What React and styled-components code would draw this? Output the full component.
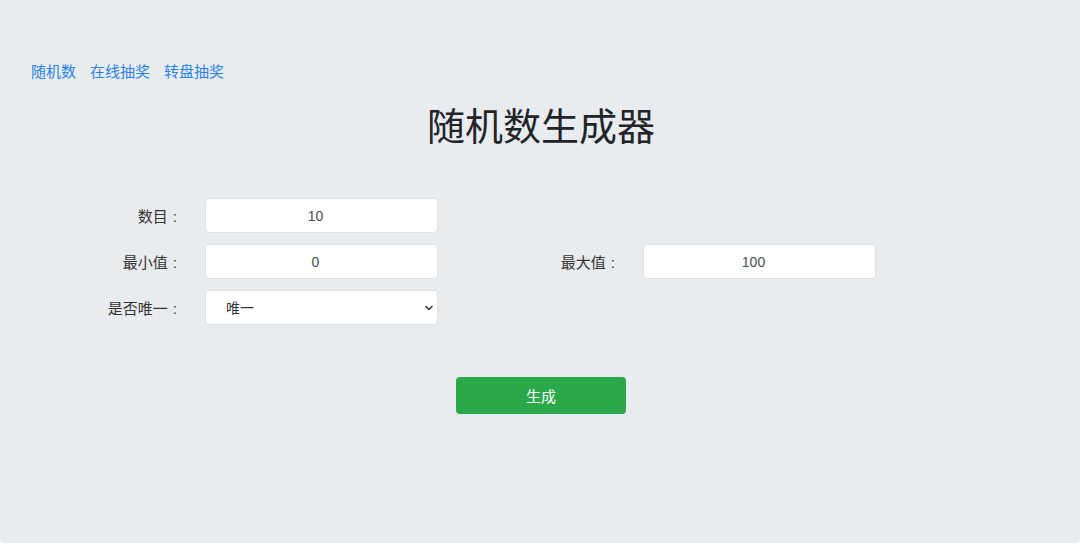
import React, { useState } from 'react'
import styled, { createGlobalStyle } from 'styled-components'
import { ChevronDown } from 'lucide-react'

const GlobalStyle = createGlobalStyle`
  html, body {
    margin: 0;
    padding: 0;
    background: #ffffff;
  }
  body {
    font-family: "Liberation Sans", "Noto Sans CJK SC", sans-serif;
    color: #333;
  }
`

const Panel = styled.div`
  height: 543px;
  box-sizing: border-box;
  background: #e9ecef;
  border-radius: 0 0 4px 4px;
  padding-top: 61px;
`

const Nav = styled.nav`
  display: flex;
  gap: 14px;
  padding-left: 31px;

  a {
    font-size: 15px;
    line-height: 22px;
    color: #2a82e8;
    text-decoration: none;
  }
`

const Title = styled.h1`
  margin: 21px 0 0;
  text-align: center;
  font-size: 38px;
  line-height: 46px;
  font-weight: 400;
  color: #212529;
  padding-left: 2px;
`

const Form = styled.div`
  margin-top: 48px;
  padding-left: 24px;
  display: grid;
  grid-template-columns: 157px 233px 157px 233px;
  column-gap: 24px;
  row-gap: 11px;
  align-items: center;
`

const Label = styled.label`
  text-align: right;
  padding-right: 4px;
  font-size: 15px;
  color: #333;
  grid-column: ${p => p.$col || 1};

  span {
    margin-left: 5px;
  }
`

const Field = styled.input`
  box-sizing: border-box;
  width: 233px;
  height: 35px;
  padding: 0 12px 0 0;
  border: 1px solid #dde2e6;
  border-radius: 4px;
  background: #fff;
  text-align: center;
  font-family: "Liberation Sans", "Noto Sans CJK SC", sans-serif;
  font-size: 14px;
  color: #495057;
  outline: none;
`

const SelectWrap = styled.div`
  position: relative;
  width: 233px;
  height: 35px;

  svg {
    position: absolute;
    right: 3px;
    top: 12px;
    pointer-events: none;
    color: #333;
  }
`

const Select = styled.select`
  appearance: none;
  box-sizing: border-box;
  width: 100%;
  height: 100%;
  border: 1px solid #dde2e6;
  border-radius: 4px;
  background: #fff;
  padding-left: 20px;
  font-family: "Liberation Sans", "Noto Sans CJK SC", sans-serif;
  font-size: 14px;
  color: #333;
  outline: none;
`

const Actions = styled.div`
  margin-top: 52px;
  display: flex;
  justify-content: center;
  padding-left: 2px;
`

const Button = styled.button`
  width: 170px;
  height: 37px;
  border: none;
  border-radius: 4px;
  background: #2ba84a;
  color: #fff;
  font-family: "Liberation Sans", "Noto Sans CJK SC", sans-serif;
  font-size: 15px;
  cursor: pointer;
`

export default function App() {
  const [count, setCount] = useState('10')
  const [min, setMin] = useState('0')
  const [max, setMax] = useState('100')
  const [unique, setUnique] = useState('1')

  return (
    <>
      <GlobalStyle />
      <Panel>
        <Nav>
          <a href="#">随机数</a>
          <a href="#">在线抽奖</a>
          <a href="#">转盘抽奖</a>
        </Nav>
        <Title>随机数生成器</Title>
        <Form>
          <Label>数目<span>:</span></Label>
          <Field value={count} onChange={e => setCount(e.target.value)} />
          <Label>最小值<span>:</span></Label>
          <Field value={min} onChange={e => setMin(e.target.value)} />
          <Label $col={3}>最大值<span>:</span></Label>
          <Field value={max} onChange={e => setMax(e.target.value)} />
          <Label>是否唯一<span>:</span></Label>
          <SelectWrap>
            <Select value={unique} onChange={e => setUnique(e.target.value)}>
              <option value="1">唯一</option>
              <option value="0">不唯一</option>
            </Select>
            <ChevronDown size={12} strokeWidth={3} />
          </SelectWrap>
        </Form>
        <Actions>
          <Button>生成</Button>
        </Actions>
      </Panel>
    </>
  )
}
